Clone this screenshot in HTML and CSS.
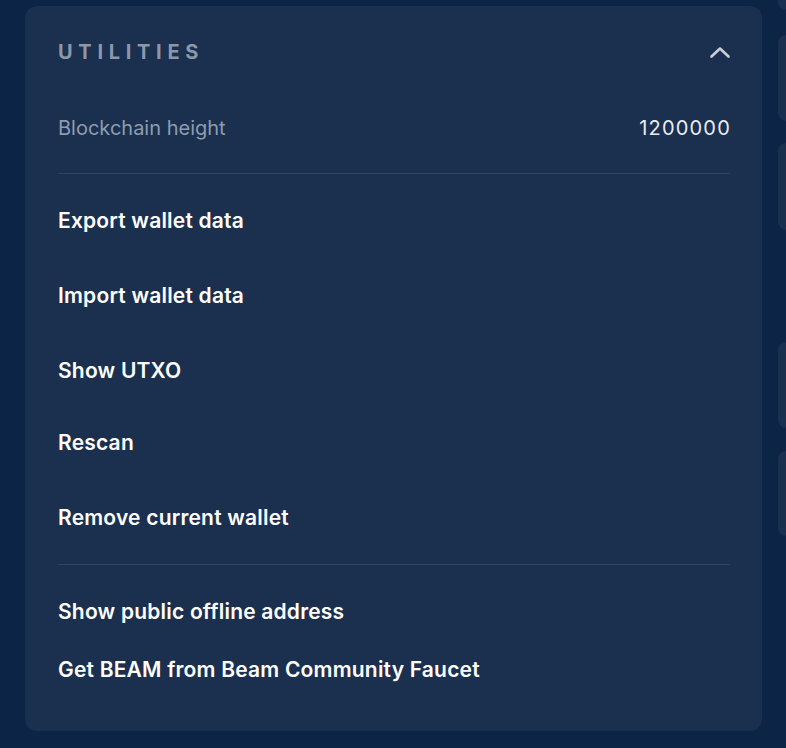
FILE: index.html
```html
<!DOCTYPE html>
<html>
<head>
<meta charset="utf-8">
<link rel="stylesheet" href="styles.css">
</head>
<body>
<div class="page">
  <section class="card">
    <div class="card-head">
      <span class="title">UTILITIES</span>
      <svg class="chev" width="22" height="14" viewBox="0 0 22 14"><path d="M2.5 11.5 L11 3.5 L19.5 11.5" fill="none" stroke="#c9cfd6" stroke-width="2.6" stroke-linecap="round" stroke-linejoin="round"/></svg>
    </div>
    <div class="stat">
      <span class="stat-label">Blockchain height</span>
      <span class="stat-value">1200000</span>
    </div>
    <div class="divider div1"></div>
    <div class="items">
      <div class="item">Export wallet data</div>
      <div class="item">Import wallet data</div>
      <div class="item">Show UTXO</div>
      <div class="item tight">Rescan</div>
      <div class="item">Remove current wallet</div>
    </div>
    <div class="divider div2"></div>
    <div class="items lower">
      <div class="item">Show public offline address</div>
      <div class="item close">Get BEAM from Beam Community Faucet</div>
    </div>
  </section>
  <aside class="side">
    <div class="side-card s1"></div>
    <div class="side-card s2"></div>
    <div class="side-card s3"></div>
    <div class="side-card s4"></div>
    <div class="side-card s5"></div>
  </aside>
</div>
</body>
</html>
```

FILE: styles.css
```css
html, body {
  margin: 0;
  padding: 0;
  background: #0c2445;
  overflow: hidden;
  height: 748px;
}
body {
  font-family: Inter, "Noto Sans", sans-serif;
  color: #ffffff;
}
.page {
  display: flex;
  align-items: flex-start;
  gap: 16px;
  padding-left: 25px;
}
.card {
  flex: none;
  width: 737px;
  height: 725px;
  margin-top: 6px;
  box-sizing: border-box;
  background: #1b2f4f;
  border-radius: 12px;
  padding: 32px 32px 0 33px;
}
.card-head {
  display: flex;
  justify-content: space-between;
  align-items: center;
  height: 28px;
}
.title {
  font-size: 20px;
  font-weight: 700;
  letter-spacing: 5.7px;
  color: #8b98a9;
  line-height: 28px;
}
.chev {
  display: block;
  margin-right: -1px;
}
.stat {
  display: flex;
  justify-content: space-between;
  align-items: center;
  margin-top: 48px;
  line-height: 28px;
  font-size: 20px;
}
.stat-label {
  color: #8d9db0;
  font-weight: 400;
}
.stat-value {
  color: #e9edf1;
  font-weight: 400;
  letter-spacing: 1.2px;
  margin-right: -1px;
}
.divider {
  height: 1px;
  background: #2f4566;
}
.div1 { margin-top: 31px; }
.div2 { margin-top: 32px; }
.items {
  margin-top: 33px;
}
.item {
  font-size: 21px;
  font-weight: 600;
  line-height: 28px;
  letter-spacing: 0.2px;
  color: #ffffff;
}
.item + .item { margin-top: 47px; }
.item.tight { margin-top: 44px; }
.items.lower { margin-top: 33px; }
.item.close { margin-top: 30px; }
.side {
  display: flex;
  flex-direction: column;
  gap: 24px;
  width: 8px;
  flex: none;
}
.side-card {
  background: #1b2f4f;
  border-radius: 10px 0 0 10px;
}
.s1 { height: 90px; margin-top: -80px; }
.s2 { height: 86px; margin-top: 1px; }
.s3 { height: 87px; margin-top: -2px; }
.s4 { height: 86px; margin-top: 88px; }
.s5 { height: 85px; margin-top: -1px; }
```
